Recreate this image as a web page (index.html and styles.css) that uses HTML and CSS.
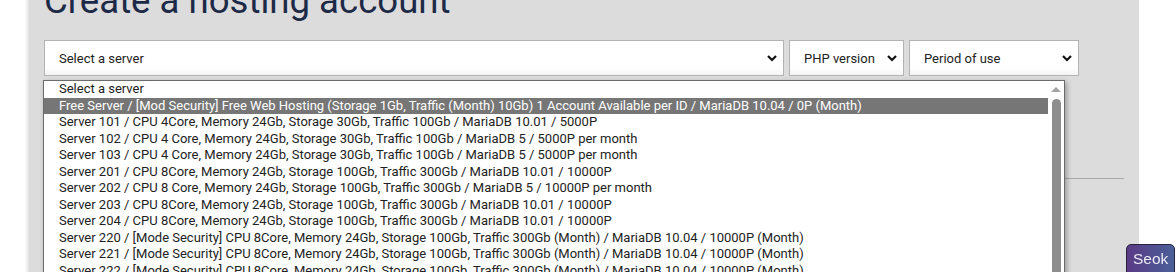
FILE: index.html
```html
<!DOCTYPE html>
<html lang="en">
<head>
    <meta charset="UTF-8">
    <title>Create a hosting account</title>
    <link rel="stylesheet" href="styles.css">
</head>
<body>
<div class="panel">
    <h1 class="title">Create a hosting account</h1>
    <form class="host-form" action="#">
        <div class="select-row">
            <div class="fake-select server-select">
                <span>Select a server</span>
                <svg class="chev" width="10" height="7" viewBox="0 0 10 7"><polyline points="1,1 5,5 9,1" fill="none" stroke="#111" stroke-width="2.2"/></svg>
            </div>
            <div class="fake-select php-select">
                <span>PHP version</span>
                <svg class="chev" width="10" height="7" viewBox="0 0 10 7"><polyline points="1,1 5,5 9,1" fill="none" stroke="#111" stroke-width="2.2"/></svg>
            </div>
            <div class="fake-select period-select">
                <span>Period of use</span>
                <svg class="chev" width="10" height="7" viewBox="0 0 10 7"><polyline points="1,1 5,5 9,1" fill="none" stroke="#111" stroke-width="2.2"/></svg>
            </div>
        </div>
        <div class="form-body">
            <div class="divider"></div>
        </div>

        <!-- open list of the server select -->
        <div class="server-list">
            <ul class="options">
                <li>Select a server</li>
                <li class="active">Free Server / [Mod Security] Free Web Hosting (Storage 1Gb, Traffic (Month) 10Gb) 1 Account Available per ID / MariaDB 10.04 / 0P (Month)</li>
                <li>Server 101 / CPU 4Core, Memory 24Gb, Storage 30Gb, Traffic 100Gb / MariaDB 10.01 / 5000P</li>
                <li>Server 102 / CPU 4 Core, Memory 24Gb, Storage 30Gb, Traffic 100Gb / MariaDB 5 / 5000P per month</li>
                <li>Server 103 / CPU 4 Core, Memory 24Gb, Storage 30Gb, Traffic 100Gb / MariaDB 5 / 5000P per month</li>
                <li>Server 201 / CPU 8Core, Memory 24Gb, Storage 100Gb, Traffic 300Gb / MariaDB 10.01 / 10000P</li>
                <li>Server 202 / CPU 8 Core, Memory 24Gb, Storage 100Gb, Traffic 300Gb / MariaDB 5 / 10000P per month</li>
                <li>Server 203 / CPU 8Core, Memory 24Gb, Storage 100Gb, Traffic 300Gb / MariaDB 10.01 / 10000P</li>
                <li>Server 204 / CPU 8Core, Memory 24Gb, Storage 100Gb, Traffic 300Gb / MariaDB 10.01 / 10000P</li>
                <li>Server 220 / [Mode Security] CPU 8Core, Memory 24Gb, Storage 100Gb, Traffic 300Gb (Month) / MariaDB 10.04 / 10000P (Month)</li>
                <li>Server 221 / [Mode Security] CPU 8Core, Memory 24Gb, Storage 100Gb, Traffic 300Gb (Month) / MariaDB 10.04 / 10000P (Month)</li>
                <li>Server 222 / [Mode Security] CPU 8Core, Memory 24Gb, Storage 100Gb, Traffic 300Gb (Month) / MariaDB 10.04 / 10000P (Month)</li>
                <li>Server 223 / [Mode Security] CPU 8Core, Memory 24Gb, Storage 100Gb, Traffic 300Gb (Month) / MariaDB 10.04 / 10000P (Month)</li>
            </ul>
            <div class="scrollbar">
                <span class="arrow-up"></span>
                <span class="thumb"></span>
            </div>
        </div>
    </form>
</div>
<button class="seok" type="button">Seok</button>
</body>
</html>
```

FILE: styles.css
```css
html, body {
    margin: 0;
    height: 100%;
    overflow: hidden;
    background: #fff;
}

body {
    font-family: Roboto, "Liberation Sans", sans-serif;
    color: #222;
}

.panel {
    margin-left: 29px;
    width: 1080px;
    min-height: 100%;
    padding: 0 15px;
    background-color: #dcdcdc;
    box-shadow: -2px 0 3px rgba(0, 0, 0, 0.12);
}

.title {
    margin: -20px 0 0;
    font-size: 36.6px;
    line-height: 42px;
    font-weight: 400;
    color: #1d2a47;
}

.host-form {
    position: relative;
    margin-top: 18px;
}

.select-row {
    display: flex;
    gap: 5px;
}

.fake-select {
    display: flex;
    align-items: center;
    justify-content: space-between;
    box-sizing: border-box;
    height: 36px;
    padding: 0 6px 0 14px;
    font-size: 13px;
    color: #222;
    background: linear-gradient(#fff 80%, #f3f3f3);
    border: 1px solid #b3b3b3;
}

.server-select {
    width: 740px;
}

.php-select {
    width: 115px;
}

.period-select {
    width: 170px;
}

.chev {
    display: block;
}

.form-body {
    height: 300px;
    padding-top: 102px;
}

.divider {
    border-top: 1px solid #a9a9a9;
}

/* the opened list lies over the form */
.server-list {
    position: absolute;
    left: -1px;
    top: 40px;
    width: 1020px;
    height: 260px;
    display: flex;
    background: #fff;
    border: 1px solid #6b6b6b;
    box-shadow: 2px 2px 5px rgba(0, 0, 0, 0.3);
}

.options {
    flex: 1;
    margin: 0;
    padding: 0;
    list-style: none;
    font-size: 13px;
    line-height: 16.5px;
    color: #222;
}

.options li {
    padding-left: 15px;
    white-space: nowrap;
}

.options li.active {
    background-color: #767676;
    color: #fff;
}

.scrollbar {
    width: 16px;
    display: flex;
    flex-direction: column;
    align-items: center;
    padding-top: 6px;
}

.arrow-up {
    width: 0;
    height: 0;
    border-left: 5px solid transparent;
    border-right: 5px solid transparent;
    border-bottom: 5px solid #a3a3a3;
}

.thumb {
    margin-top: 7px;
    width: 9px;
    flex: 1;
    background-color: #8d8d8d;
    border-radius: 5px 5px 0 0;
}

.seok {
    position: fixed;
    left: 1126px;
    top: 244px;
    width: 49px;
    height: 34px;
    padding: 0 0 4px 6px;
    text-align: left;
    font-family: "Liberation Sans", Arial, sans-serif;
    font-size: 15.5px;
    color: #eceaf5;
    background: linear-gradient(90deg, #5a3a86, #4a6098);
    border: 1px solid #2b2140;
    border-radius: 5px;
}
```
